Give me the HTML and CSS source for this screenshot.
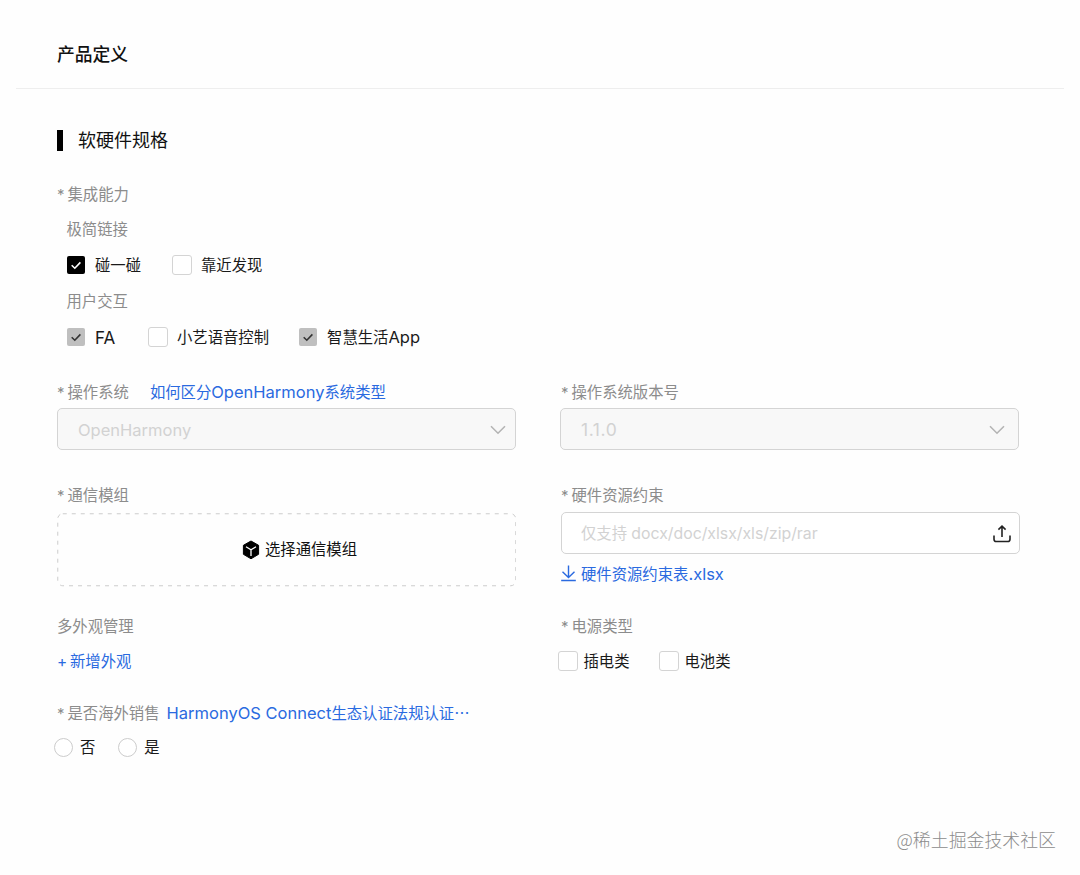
FILE: index.html
```html
<!DOCTYPE html>
<html lang="zh-CN">
<head>
  <meta charset="UTF-8">
  <meta name="viewport" content="width=device-width, initial-scale=1.0">
  <title>产品定义</title>
  <link rel="stylesheet" href="styles.css">
</head>
<body>
  <div class="page">
    <header class="page-header">
      <h1>产品定义</h1>
    </header>

    <main class="content">
      <h2 class="section-title">软硬件规格</h2>

      <div class="label"><span class="required">*</span>集成能力</div>
      <div class="abilities">
        <div class="sub-label">极简链接</div>
        <div class="options">
          <label class="option"><span class="checkbox checked"><svg viewBox="0 0 18 18"><path d="M4.7 9.2l3.1 3 5.6-5.8"/></svg></span>碰一碰</label>
          <label class="option"><span class="checkbox"></span>靠近发现</label>
        </div>
        <div class="sub-label">用户交互</div>
        <div class="options interact">
          <label class="option"><span class="checkbox disabled"><svg viewBox="0 0 18 18"><path d="M4.7 9.2l3.1 3 5.6-5.8"/></svg></span><span class="latin fa">FA</span></label>
          <label class="option"><span class="checkbox"></span>小艺语音控制</label>
          <label class="option"><span class="checkbox disabled"><svg viewBox="0 0 18 18"><path d="M4.7 9.2l3.1 3 5.6-5.8"/></svg></span><span>智慧生活<span class="latin">App</span></span></label>
        </div>
      </div>

      <div class="row row-system">
        <div class="field">
          <div class="label"><span class="required">*</span>操作系统<a class="link help" href="#">如何区分<span class="latin">OpenHarmony</span>系统类型</a></div>
          <div class="select">
            <span class="latin">OpenHarmony</span>
            <svg class="arrow" viewBox="0 0 16 10"><path d="M1 1.2l7 7 7-7"/></svg>
          </div>
        </div>
        <div class="field">
          <div class="label"><span class="required">*</span>操作系统版本号</div>
          <div class="select version">
            <span class="latin">1.1.0</span>
            <svg class="arrow" viewBox="0 0 16 10"><path d="M1 1.2l7 7 7-7"/></svg>
          </div>
        </div>
      </div>

      <div class="row row-module">
        <div class="field">
          <div class="label"><span class="required">*</span>通信模组</div>
          <div class="picker">
            <svg class="frame"><rect x="0.75" y="0.75" width="458" height="72" rx="5"/></svg>
            <svg class="cube" viewBox="0 0 18 20">
              <path class="cube-body" d="M9 1l7.6 4.3v9L9 18.8 1.4 14.3v-9z"/>
              <path class="cube-edge" d="M4 6.8l5 2.9 5-2.9M9 9.7v6.2"/>
            </svg>
            <span>选择通信模组</span>
          </div>
        </div>
        <div class="field">
          <div class="label"><span class="required">*</span>硬件资源约束</div>
          <div class="upload">
            <span>仅支持 <span class="formats">docx/doc/xlsx/xls/zip/rar</span></span>
            <svg class="upload-icon" viewBox="0 0 18 18"><path d="M9 12V1.2M5.4 4.6L9 1.2l3.6 3.4M1 10.5v3.7a2.3 2.3 0 0 0 2.3 2.3h11.4a2.3 2.3 0 0 0 2.3-2.3v-3.7"/></svg>
          </div>
          <a class="link download" href="#">
            <svg viewBox="0 0 16 18"><path d="M8 0v12.5M1.6 6.6L8 12.8l6.4-6.2M.2 16h15.6"/></svg>
            <span>硬件资源约束表<span class="latin">.xlsx</span></span>
          </a>
        </div>
      </div>

      <div class="row row-look">
        <div class="field">
          <div class="label">多外观管理</div>
          <a class="link add" href="#"><span class="plus">+</span>新增外观</a>
        </div>
        <div class="field">
          <div class="label"><span class="required">*</span>电源类型</div>
          <div class="options power">
            <label class="option"><span class="checkbox"></span>插电类</label>
            <label class="option"><span class="checkbox"></span>电池类</label>
          </div>
        </div>
      </div>

      <div class="label overseas"><span class="required">*</span>是否海外销售<a class="link rule" href="#"><span class="latin">HarmonyOS Connect</span>生态认证法规认证⋯</a></div>
      <div class="options sale">
        <label class="option"><span class="radio"></span>否</label>
        <label class="option"><span class="radio"></span>是</label>
      </div>
    </main>

    <div class="watermark">@稀土掘金技术社区</div>
  </div>
</body>
</html>
```

FILE: styles.css
```css
* {
  box-sizing: border-box;
}
body {
  margin: 0;
  background: #fefefe;
  color: #1a1a1a;
  font-family: Inter, "Noto Sans CJK SC", sans-serif;
  font-size: 15.35px;
  line-height: 24px;
}
h1, h2 {
  margin: 0;
  color: #111;
  line-height: 24px;
}
svg {
  display: block;
  fill: none;
  flex: none;
}
.page {
  position: relative;
  height: 875px;
  overflow: hidden;
}
.page-header {
  display: flex;
  align-items: center;
  height: 89px;
  margin: 0 16px;
  padding: 21px 41px 0;
  border-bottom: 1px solid #eee;
}
.page-header h1 {
  font-size: 17.8px;
  font-weight: 500;
}
.content {
  padding: 39px 60px 0 57px;
}
.section-title {
  display: flex;
  align-items: center;
  gap: 15px;
  height: 24px;
  padding-top: 2px;
  font-size: 18px;
  font-weight: 400;
}
.section-title::before {
  content: "";
  width: 6px;
  height: 21px;
  margin-bottom: 1px;
  background: #000;
}

.label, .sub-label {
  height: 24px;
  color: #8c8c8c;
  line-height: 26px;
  white-space: nowrap;
}
.section-title + .label {
  margin-top: 30px;
}
.required {
  display: inline-block;
  width: 10.5px;
  font-size: 15px;
}
.latin {
  font-size: 16.5px;
  line-height: 1;
}
.link {
  color: #2a6ae0;
  text-decoration: none;
}
.help {
  margin-left: 21px;
}

.abilities {
  display: grid;
  gap: 12px;
  margin-top: 11px;
  padding-left: 9px;
}
.sub-label {
  padding-left: 0.5px;
}
.options {
  display: flex;
  gap: 31px;
  height: 24px;
  padding-top: 2px;
}
.interact {
  gap: 29px;
}
.option {
  display: flex;
  align-items: center;
  gap: 9px;
}
.fa {
  width: 24px;
  font-size: 17px;
}
.checkbox {
  width: 20px;
  height: 20px;
  margin-bottom: 2px;
  border: 1px solid #d4d4d4;
  border-radius: 3px;
  background: #fff;
}
.checkbox.checked, .checkbox.disabled {
  width: 18px;
  height: 18px;
  margin: 0 1px 2px;
  border: none;
  border-radius: 2px;
  background: #000;
}
.checkbox.disabled {
  background: #bfbfbf;
}
.checkbox svg {
  stroke: #fff;
  stroke-width: 1.6;
}
.checkbox.disabled svg {
  stroke: #333;
}

.row {
  display: grid;
  grid-template-columns: 459px 459px;
  gap: 45px;
}
.row-system {
  margin-top: 31px;
}
.row-module {
  margin-top: 33px;
}
.row-look {
  margin-top: 27px;
}
.select, .upload {
  display: flex;
  align-items: center;
  justify-content: space-between;
  height: 42px;
  border: 1.5px solid #d4d4d4;
  border-radius: 5px;
  color: #d2d2d2;
}
.select {
  margin-top: 4px;
  padding: 2px 9px 0 20px;
  background: #f8f8f8;
}
.version {
  margin-left: -1px;
  margin-right: 1px;
  padding-right: 13px;
}
.version .latin {
  font-size: 17.5px;
  letter-spacing: 0.6px;
}
.arrow {
  width: 16px;
  height: 10px;
  stroke: #b4b4b4;
  stroke-width: 1.6;
}
.picker {
  position: relative;
  display: flex;
  align-items: center;
  justify-content: center;
  gap: 5px;
  height: 74px;
  margin-top: 6px;
  padding-left: 26px;
  color: #111;
}
/* svg outline gives control over the dash length */
.frame {
  position: absolute;
  inset: 0;
  width: 100%;
  height: 100%;
  stroke: #ccc;
  stroke-dasharray: 4 5;
}
.cube {
  width: 18px;
  height: 20px;
  margin-bottom: 1px;
}
.cube-body {
  fill: #000;
  stroke: #000;
  stroke-linejoin: round;
}
.cube-edge {
  stroke: #fff;
  stroke-width: 1.3;
}
.upload {
  margin-top: 5px;
  padding: 2px 8px 0 19px;
  background: #fff;
}
.formats {
  font-size: 15.8px;
}
.upload-icon {
  width: 18px;
  height: 18px;
  margin-bottom: 1px;
  stroke: #222;
  stroke-width: 1.6;
}
.download {
  display: flex;
  align-items: center;
  gap: 5px;
  margin-top: 9px;
}
.download svg {
  width: 15px;
  height: 18px;
  margin-bottom: 2px;
  stroke: #2a6ae0;
  stroke-width: 1.5;
}
.add {
  display: block;
  height: 24px;
  margin-top: 11px;
  line-height: 26px;
}
.plus {
  display: inline-block;
  width: 13px;
}
.power {
  gap: 29px;
  margin: 11px 0 0 -3.5px;
}
.power .option {
  gap: 6px;
}
.overseas {
  margin-top: 28px;
}
.rule {
  margin-left: 7px;
}
.sale {
  gap: 23px;
  margin: 10px 0 0 -3px;
}
.sale .option {
  gap: 7px;
}
.radio {
  width: 19px;
  height: 19px;
  margin-bottom: 1px;
  border: 1px solid #ccc;
  border-radius: 50%;
  background: #fff;
}
.watermark {
  position: absolute;
  right: 24px;
  bottom: 24px;
  color: #8c8c8c;
  font-family: "Noto Sans CJK SC", sans-serif;
  font-size: 17.9px;
  font-weight: 300;
}
```
